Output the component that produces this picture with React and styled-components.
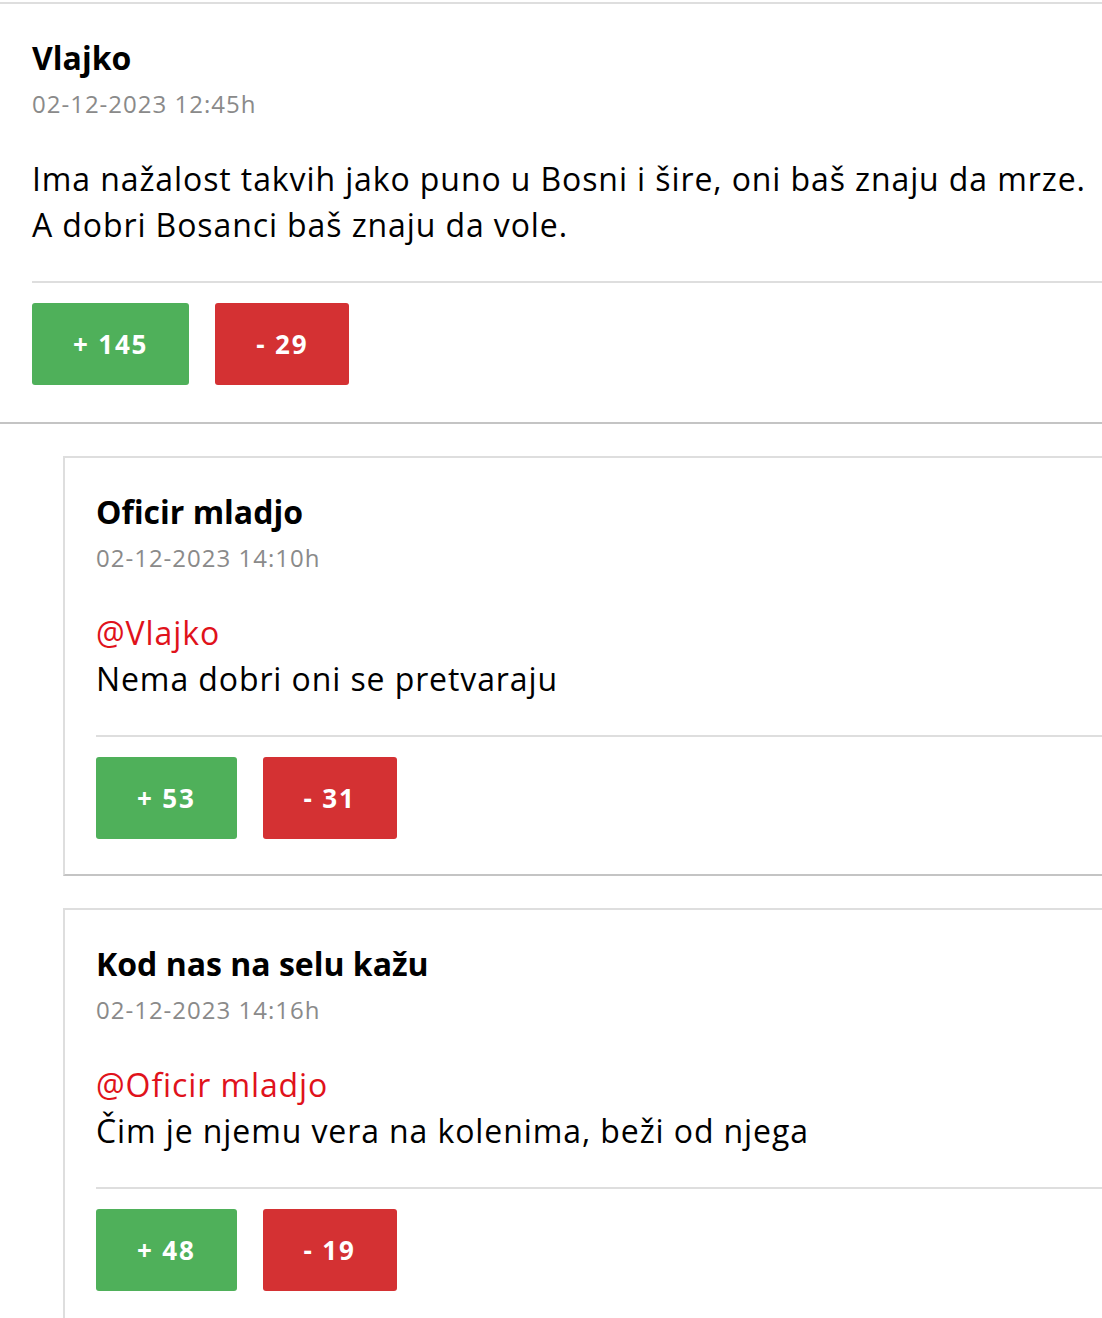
import React from "react";
import styled, { createGlobalStyle } from "styled-components";

const GlobalStyle = createGlobalStyle`
  html, body {
    margin: 0;
    padding: 0;
    background: #fff;
    font-family: "Open Sans", "Noto Sans", sans-serif;
    color: #000;
  }
  * { box-sizing: border-box; }
`;

const Page = styled.div`
  width: 1102px;
  padding-top: 2px;
  overflow: hidden;
`;

const Comment = styled.article`
  border-top: 2px solid #dedede;
  border-bottom: 2px solid #c4c4c4;
  padding: 30px 0 37px 32px;
`;

const Replies = styled.div`
  display: flex;
  flex-direction: column;
  gap: 32px;
  padding: 32px 0 0 63px;
`;

const Reply = styled.article`
  border-top: 2px solid #dedede;
  border-left: 2px solid #dedede;
  border-bottom: 2px solid #c4c4c4;
  padding: 30px 0 35px 31px;
  margin-right: -2px;
`;

const Author = styled.h3`
  margin: 0;
  font-size: 32px;
  font-weight: 700;
  line-height: 48px;
`;

const Date = styled.div`
  margin-top: 4px;
  font-size: 24px;
  line-height: 36px;
  color: #8a8a8a;
  letter-spacing: 1px;
`;

const Body = styled.p`
  margin: 34px 0 0;
  font-size: 32px;
  line-height: 46px;
  letter-spacing: 0.9px;
  padding-bottom: 33px;
  border-bottom: 2px solid #dedede;
`;

const Mention = styled.span`
  display: block;
  color: #e0121b;
`;

const Votes = styled.div`
  display: flex;
  gap: 26px;
  margin-top: 20px;
`;

const VoteButton = styled.button`
  height: 82px;
  padding: 0 41px;
  border: none;
  border-radius: 3px;
  background: ${(p) => (p.$down ? "#d43133" : "#4fb05a")};
  color: #fff;
  font-family: inherit;
  font-size: 26px;
  font-weight: 700;
  letter-spacing: 1.8px;
  cursor: pointer;
`;

const replies = [
  {
    author: "Oficir mladjo",
    date: "02-12-2023 14:10h",
    mention: "@Vlajko",
    text: "Nema dobri oni se pretvaraju",
    up: 53,
    down: 31,
  },
  {
    author: "Kod nas na selu kažu",
    date: "02-12-2023 14:16h",
    mention: "@Oficir mladjo",
    text: "Čim je njemu vera na kolenima, beži od njega",
    up: 48,
    down: 19,
  },
];

const VoteRow = ({ up, down }) => (
  <Votes>
    <VoteButton>+ {up}</VoteButton>
    <VoteButton $down>- {down}</VoteButton>
  </Votes>
);

export default function App() {
  return (
    <Page>
      <GlobalStyle />
      <Comment>
        <Author>Vlajko</Author>
        <Date>02-12-2023 12:45h</Date>
        <Body>
          Ima nažalost takvih jako puno u Bosni i šire, oni baš znaju da mrze.
          A dobri Bosanci baš znaju da vole.
        </Body>
        <VoteRow up={145} down={29} />
      </Comment>
      <Replies>
        {replies.map((r) => (
          <Reply key={r.author}>
            <Author>{r.author}</Author>
            <Date>{r.date}</Date>
            <Body>
              <Mention>{r.mention}</Mention>
              {r.text}
            </Body>
            <VoteRow up={r.up} down={r.down} />
          </Reply>
        ))}
      </Replies>
    </Page>
  );
}
